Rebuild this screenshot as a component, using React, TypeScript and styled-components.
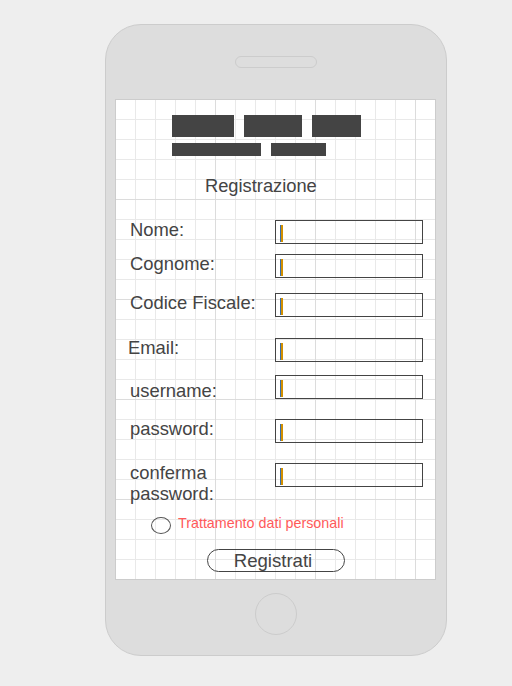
import React from "react";
import styled, { createGlobalStyle } from "styled-components";

const GlobalStyle = createGlobalStyle`
  html, body {
    margin: 0;
    padding: 0;
    background: #eeeeee;
  }
  * { box-sizing: border-box; }
`;

const Page = styled.div`
  width: 512px;
  height: 686px;
  padding: 24px 0 0 105px;
  font-family: "Liberation Sans", Arial, sans-serif;
`;

const Phone = styled.div`
  width: 342px;
  height: 632px;
  border: 1px solid #cccccc;
  border-radius: 36px;
  background: #dddddd;
  display: flex;
  flex-direction: column;
  align-items: center;
`;

const Speaker = styled.div`
  margin-top: 31px;
  width: 82px;
  height: 12px;
  border: 1px solid #cccccc;
  border-radius: 6px;
`;

const Screen = styled.div`
  margin: 31px 0 0 9px;
  align-self: flex-start;
  width: 321px;
  height: 481px;
  border: 1px solid #cccccc;
  background-color: #ffffff;
  background-image:
    linear-gradient(#dcdcdc 1px, transparent 1px),
    linear-gradient(90deg, #dcdcdc 1px, transparent 1px),
    linear-gradient(#e9e9e9 1px, transparent 1px),
    linear-gradient(90deg, #e9e9e9 1px, transparent 1px);
  background-size: 100px 100px, 100px 100px, 20px 20px, 20px 20px;
  background-origin: border-box;
  display: flex;
  flex-direction: column;
  padding-top: 15px;
  overflow: hidden;
`;

const HomeButton = styled.div`
  margin-top: 13px;
  width: 42px;
  height: 42px;
  border: 1px solid #cccccc;
  border-radius: 50%;
`;

const Logo = styled.div`
  padding-left: 56px;
  display: flex;
  flex-direction: column;
  gap: 6px;
`;

const LogoRow = styled.div`
  display: flex;
  gap: 10px;
`;

const LogoBlock = styled.div<{ $w: number; $h: number }>`
  width: ${(p) => p.$w}px;
  height: ${(p) => p.$h}px;
  background: #444444;
`;

const Title = styled.div`
  margin-top: 19px;
  padding-left: 89px;
  font-size: 18.3px;
  line-height: 22px;
  color: #444444;
`;

const Form = styled.div`
  padding-left: 14px;
  display: flex;
  flex-direction: column;
`;

const Row = styled.div<{ $mt: number }>`
  margin-top: ${(p) => p.$mt}px;
  display: grid;
  grid-template-columns: 145px 148px;
  align-items: start;
`;

const Label = styled.div<{ $drop?: number; $shift?: number }>`
  margin-top: ${(p) => (p.$drop ?? 0) - 1}px;
  margin-left: ${(p) => p.$shift ?? 0}px;
  font-size: 18.4px;
  line-height: 21px;
  color: #444444;
`;

const Field = styled.div`
  width: 148px;
  height: 24px;
  border: 1px solid #444444;
  padding: 4px 0 0 4px;
`;

const Caret = styled.div`
  width: 3px;
  height: 17px;
  background: linear-gradient(90deg, #3d6fa8 0 1px, #d18f00 1px 3px);
`;

const ConsentRow = styled.div`
  margin-top: 10px;
  padding-left: 35px;
  display: flex;
  align-items: flex-start;
  gap: 7px;
`;

const Radio = styled.div`
  margin-top: 3px;
  width: 20px;
  height: 17px;
  border: 1px solid #555555;
  border-radius: 50%;
`;

const ConsentText = styled.div`
  margin-top: 1px;
  font-size: 14.3px;
  line-height: 17px;
  color: #ff5a5a;
`;

const SubmitButton = styled.div`
  margin-top: 15px;
  align-self: center;
  width: 138px;
  height: 23px;
  border: 1px solid #444444;
  border-radius: 12px;
  padding-right: 5px;
  font-size: 18.6px;
  line-height: 21px;
  color: #444444;
  text-align: center;
`;

type FieldDef = { label: string; mt: number; drop?: number; shift?: number };

const fields: FieldDef[] = [
  { label: "Nome:", mt: 23 },
  { label: "Cognome:", mt: 10 },
  { label: "Codice Fiscale:", mt: 15 },
  { label: "Email:", mt: 21, shift: -2 },
  { label: "username:", mt: 13, drop: 6 },
  { label: "password:", mt: 18 },
  { label: "conferma password:", mt: 20 },
];

export default function App() {
  return (
    <>
      <GlobalStyle />
      <Page>
        <Phone>
          <Speaker />
          <Screen>
            <Logo>
              <LogoRow>
                <LogoBlock $w={62} $h={22} />
                <LogoBlock $w={58} $h={22} />
                <LogoBlock $w={49} $h={22} />
              </LogoRow>
              <LogoRow>
                <LogoBlock $w={89} $h={13} />
                <LogoBlock $w={55} $h={13} />
              </LogoRow>
            </Logo>
            <Title>Registrazione</Title>
            <Form>
              {fields.map((f) => (
                <Row key={f.label} $mt={f.mt}>
                  <Label $drop={f.drop} $shift={f.shift}>
                    {f.label}
                  </Label>
                  <Field>
                    <Caret />
                  </Field>
                </Row>
              ))}
            </Form>
            <ConsentRow>
              <Radio />
              <ConsentText>Trattamento dati personali</ConsentText>
            </ConsentRow>
            <SubmitButton>Registrati</SubmitButton>
          </Screen>
          <HomeButton />
        </Phone>
      </Page>
    </>
  );
}
